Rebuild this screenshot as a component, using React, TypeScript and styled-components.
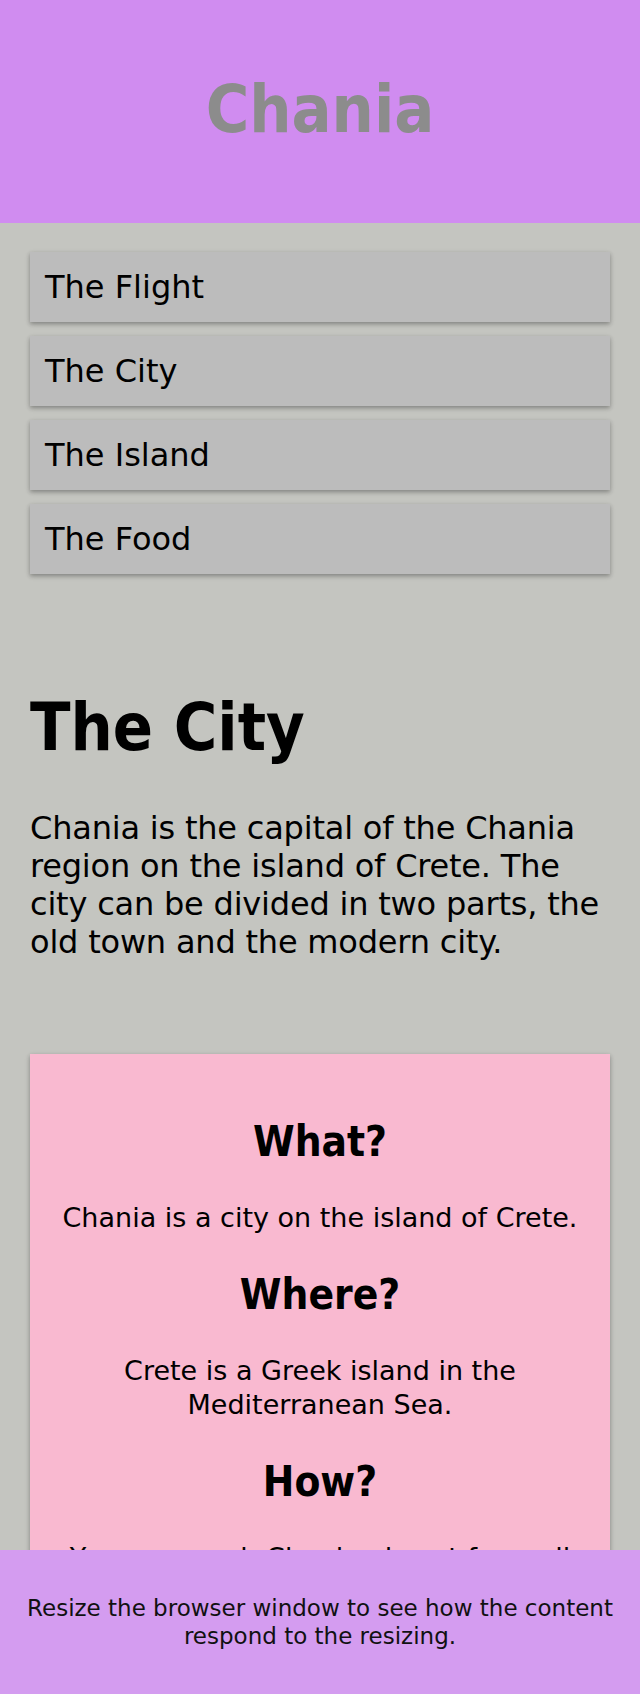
import React from "react";
import styled, { createGlobalStyle } from "styled-components";

const GlobalStyle = createGlobalStyle`
  * { box-sizing: border-box; }
  html, body { margin: 0; padding: 0; }
  body {
    background: #c4c5c0;
    color: #000;
    font-family: "Lucida Sans", "DejaVu Sans", sans-serif;
  }
`;

const headingFont = `
  font-family: "DejaVu Sans Condensed", "DejaVu Sans", sans-serif;
  font-stretch: condensed;
  font-weight: bold;
`;

const Header = styled.header`
  background: #d08cf0;
  padding: 28px 30px 32px;
`;

const SiteTitle = styled.h1`
  ${headingFont}
  margin: 0;
  text-align: center;
  color: #8c8c8c;
  font-size: 66px;
  line-height: 163px;
`;

const MenuColumn = styled.nav`
  padding: 29px 30px 44px;
`;

const MenuList = styled.ul`
  list-style: none;
  margin: 0;
  padding: 0;
  display: flex;
  flex-direction: column;
  gap: 14px;
`;

const MenuItem = styled.li`
  padding: 16px 15px;
  background: #bcbcbc;
  font-size: 32px;
  line-height: 38px;
  box-shadow: 0 2px 6px rgba(0, 0, 0, 0.12), 0 2px 4px rgba(0, 0, 0, 0.24);
`;

const MainColumn = styled.main`
  padding: 30px 30px 31px;
`;

const PageTitle = styled.h1`
  ${headingFont}
  margin: 42px 0;
  font-size: 66px;
  line-height: 76.8px;
`;

const Lead = styled.p`
  margin: 0 0 32px;
  font-size: 32px;
  line-height: 38px;
  letter-spacing: -0.2px;
`;

const AsideColumn = styled.div`
  padding: 30px 30px;
`;

const InfoCard = styled.aside`
  background: #f9b9d0;
  padding: 28px 30px;
  text-align: center;
  box-shadow: 0 2px 6px rgba(0, 0, 0, 0.12), 0 2px 4px rgba(0, 0, 0, 0.24);
`;

const CardTitle = styled.h2`
  ${headingFont}
  margin: 35px 0;
  font-size: 42px;
  line-height: 49px;
`;

const CardText = styled.p`
  margin: 0;
  font-size: 27px;
  line-height: 34px;
`;

const Footer = styled.footer`
  position: fixed;
  left: 0;
  right: 0;
  bottom: 0;
  background: #d49cf0;
  padding: 44px 20px;
  text-align: center;
  color: #111;
  font-size: 23px;
  line-height: 28px;
`;

const FooterText = styled.p`
  margin: 0;
`;

const menu = ["The Flight", "The City", "The Island", "The Food"];

const facts = [
  { q: "What?", a: "Chania is a city on the island of Crete." },
  { q: "Where?", a: "Crete is a Greek island in the Mediterranean Sea." },
  { q: "How?", a: "You can reach Chania airport from all over Europe." },
];

export default function App() {
  return (
    <>
      <GlobalStyle />
      <Header>
        <SiteTitle>Chania</SiteTitle>
      </Header>
      <MenuColumn>
        <MenuList>
          {menu.map((m) => (
            <MenuItem key={m}>{m}</MenuItem>
          ))}
        </MenuList>
      </MenuColumn>
      <MainColumn>
        <PageTitle>The City</PageTitle>
        <Lead>
          Chania is the capital of the Chania region on the island of Crete. The
          city can be divided in two parts, the old town and the modern city.
        </Lead>
      </MainColumn>
      <AsideColumn>
        <InfoCard>
          {facts.map((f) => (
            <React.Fragment key={f.q}>
              <CardTitle>{f.q}</CardTitle>
              <CardText>{f.a}</CardText>
            </React.Fragment>
          ))}
        </InfoCard>
      </AsideColumn>
      <Footer>
        <FooterText>
          Resize the browser window to see how the content respond to the
          resizing.
        </FooterText>
      </Footer>
    </>
  );
}
